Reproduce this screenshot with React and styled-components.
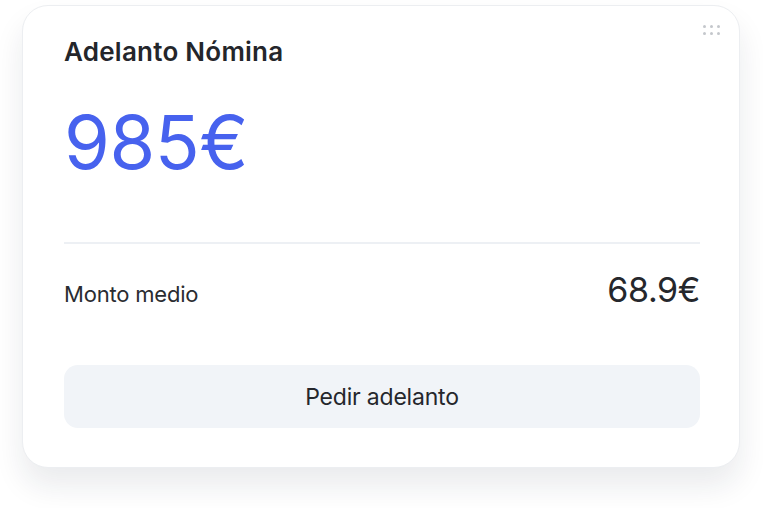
import React from "react";
import styled, { createGlobalStyle } from "styled-components";

const GlobalStyle = createGlobalStyle`
	body {
		margin: 0;
		background: #ffffff;
		font-family: Inter, "Noto Sans", sans-serif;
		-webkit-font-smoothing: antialiased;
	}
`

const Page = styled.div`
	padding: 5px 23px 40px 22px;
`

const Card = styled.div`
	position: relative;
	box-sizing: border-box;
	width: 718px;
	height: 463px;
	padding: 30px 39px 0 41px;
	background: #fff;
	border: 1px solid #eceef1;
	border-radius: 26px;
	box-shadow: 0 18px 30px rgba(20, 30, 50, 0.09);
	display: flex;
	flex-direction: column;
`

const DragHandle = styled.div`
	position: absolute;
	top: 19px;
	right: 19px;
	display: grid;
	grid-template-columns: repeat(3, 3px);
	gap: 4px;
`

const Dot = styled.span`
	width: 3px;
	height: 3px;
	border-radius: 50%;
	background: #c4c7cc;
`

const Title = styled.h2`
	margin: 0;
	font-size: 26px;
	font-weight: 600;
	letter-spacing: 0.25px;
	color: #24262b;
	line-height: 32px;
`

const Amount = styled.div`
	margin-top: 26px;
	font-size: 74px;
	font-weight: 400;
	letter-spacing: -0.5px;
	color: #4762ee;
	line-height: 96px;
`

const Divider = styled.hr`
	margin: 52px 0 0;
	border: none;
	height: 2px;
	background: #edf0f4;
`

const Row = styled.div`
	display: flex;
	justify-content: space-between;
	align-items: baseline;
	margin-top: 26px;
	line-height: 40px;
`

const Label = styled.span`
	font-size: 22px;
	color: #2a2c31;
	letter-spacing: -0.2px;
`

const Value = styled.span`
	font-size: 34px;
	color: #25272c;
	letter-spacing: -0.4px;
`

const Button = styled.button`
	margin-top: 51px;
	height: 63px;
	border: none;
	border-radius: 14px;
	background: #f1f4f8;
	font-family: inherit;
	font-size: 23px;
	color: #25272c;
	letter-spacing: -0.2px;
	cursor: pointer;
`

const App = () => {
	return (
		<Page>
			<GlobalStyle />
			<Card>
				<DragHandle>
					{[0, 1, 2, 3, 4, 5].map(i => <Dot key={i} />)}
				</DragHandle>
				<Title>Adelanto Nómina</Title>
				<Amount>985€</Amount>
				<Divider />
				<Row>
					<Label>Monto medio</Label>
					<Value>68.9€</Value>
				</Row>
				<Button>Pedir adelanto</Button>
			</Card>
		</Page>
	)
}

export default App
